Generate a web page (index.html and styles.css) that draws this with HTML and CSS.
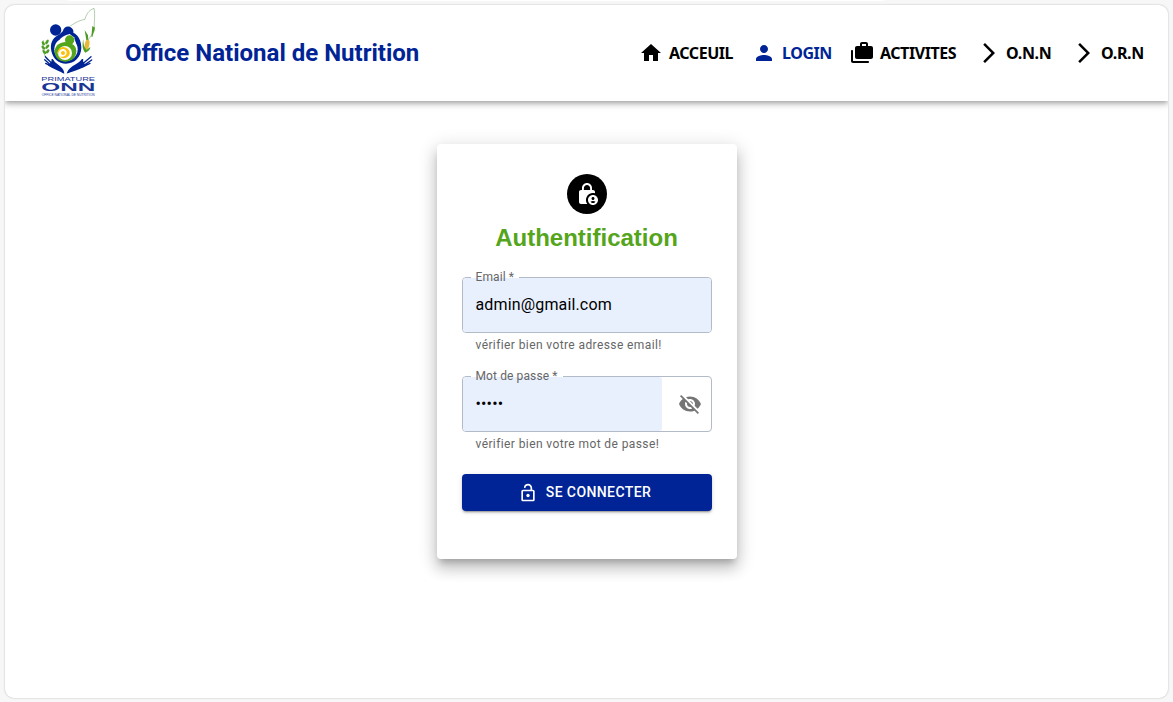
FILE: index.html
```html
<!DOCTYPE html>
<html lang="fr">
<head>
<meta charset="utf-8">
<title>Office National de Nutrition</title>
<link rel="stylesheet" href="styles.css">
</head>
<body>
<div class="tab-edge"></div>
<div class="window">
  <header class="appbar">
    <svg class="logo" viewBox="24 18 180 276">
      <path d="M103 91C125 74 145 61 165 58C168 45 175 31 192 25C197 44 190 78 194 92C187 103 178 112 172 125" fill="none" stroke="#7ba873" stroke-width="1.700"/>
      <path d="M187 78l8 5-8 28-3-1zM164 90l10 16 1 20-6-5z" fill="#4f9c25"/>
      <circle cx="77" cy="90" r="17" fill="#002495"/>
      <path d="M84 106C90 100 96 98 99 92C101 84 108 78 117 80C126 82 132 89 130 98C146 106 154 122 154 144C153 172 133 191 108 191C86 191 69 177 64 153C60 133 66 115 84 106Z" fill="#002495"/>
      <circle cx="108" cy="148" r="35" fill="#fff"/>
      <path d="M88 122C92 112 101 107 111 104L119 102L132 112L138 130L128 139L105 134Z" fill="#fff"/>
      <circle cx="119" cy="120" r="14" fill="#55a51c"/>
      <path d="M105 126C84 128 72 142 74 159C77 176 91 185 107 185C126 184 139 171 139 154C139 143 134 135 126 132Z" fill="#55a51c"/>
      <circle cx="105" cy="159" r="21" fill="#fff"/>
      <path d="M85 150C90 141 100 139 108 143C120 148 123 161 115 169C107 177 93 176 86 168C97 174 108 169 110 160C111 151 101 144 92 149C87 152 85 158 83 163C81 158 82 154 85 150Z" fill="#fdc10b"/>
      <circle cx="99" cy="159" r="6" fill="#fdc10b"/>
      <path d="M53 181C43 164 35 151 40 121" fill="none" stroke="#4e982c" stroke-width="2"/>
      <g fill="#4e9d25">
        <ellipse cx="40" cy="130" rx="4" ry="7" transform="rotate(-30 40 130)"/>
        <ellipse cx="51" cy="126" rx="4" ry="8" transform="rotate(32 51 126)"/>
        <ellipse cx="40" cy="143" rx="4" ry="7" transform="rotate(-45 40 143)"/>
        <ellipse cx="52" cy="140" rx="4" ry="8" transform="rotate(42 52 140)"/>
        <ellipse cx="43" cy="156" rx="4" ry="7" transform="rotate(-45 43 156)"/>
        <ellipse cx="53" cy="154" rx="4" ry="7" transform="rotate(38 53 154)"/>
      </g>
      <ellipse cx="171" cy="134" rx="7" ry="15" fill="#e8b936" transform="rotate(12 171 134)"/>
      <path d="M160 117C155 137 159 151 166 158C176 154 181 148 181 141L170 149C162 142 160 133 160 117Z" fill="#4e9d25"/>
      <g fill="none" stroke="#002495" stroke-linecap="round">
        <path d="M67 180C72 195 96 198 99 216C87 210 72 205 57 195" stroke-width="6" fill="#002495"/>
        <path d="M46 170L65 190M44 179L62 195M47 190L66 200" stroke-width="4"/>
        <path d="M157 180C150 195 122 198 115 216C130 211 147 207 166 195" stroke-width="6" fill="#002495"/>
        <path d="M183 170L160 190M185 180L162 196M180 190L158 201" stroke-width="4"/>
      </g>
      <g class="logo-text">
        <text x="34" y="244" font-size="18" textLength="161" lengthAdjust="spacingAndGlyphs">PRIMATURE</text>
        <text x="34" y="273" font-size="31" font-weight="700" textLength="162" lengthAdjust="spacingAndGlyphs">ONN</text>
        <text x="35" y="287" font-size="10" textLength="159" lengthAdjust="spacingAndGlyphs">OFFICE NATIONAL DE NUTRITION</text>
      </g>
    </svg>
    <h1 class="brand">Office National de Nutrition</h1>
    <nav class="nav">
      <a class="nav-item home"><svg class="icon" viewBox="0 0 24 24"><path d="M10 20v-6h4v6h5v-8h3L12 3 2 12h3v8z"/></svg><span>ACCEUIL</span></a>
      <a class="nav-item login"><svg class="icon" viewBox="0 0 24 24"><path d="M12 12c2.210 0 4-1.790 4-4s-1.790-4-4-4-4 1.790-4 4 1.790 4 4 4zm0 2c-2.670 0-8 1.340-8 4v2h16v-2c0-2.660-5.330-4-8-4z"/></svg><span>LOGIN</span></a>
      <a class="nav-item activities"><svg class="icon" viewBox="0 0 24 24"><path d="M2 9c-.55 0-1 .45-1 1v10c0 1.100.9 2 2 2h15c.55 0 1-.45 1-1s-.45-1-1-1H3V10c0-.55-.45-1-1-1zM18 5V3c0-1.100-.9-2-2-2h-4c-1.100 0-2 .9-2 2v2H7c-1.100 0-2 .9-2 2v9c0 1.100.9 2 2 2h14c1.100 0 2-.9 2-2V7c0-1.100-.9-2-2-2h-3zm-6-2h4v2h-4V3z"/></svg><span>ACTIVITES</span></a>
      <a class="nav-item onn"><svg class="icon" viewBox="0 0 24 24"><path d="M6.230 20.230 8 22l10-10L8 2 6.230 3.770 14.460 12z"/></svg><span>O.N.N</span></a>
      <a class="nav-item orn"><svg class="icon" viewBox="0 0 24 24"><path d="M6.230 20.230 8 22l10-10L8 2 6.230 3.770 14.460 12z"/></svg><span>O.R.N</span></a>
    </nav>
  </header>
  <main class="content">
    <form class="card">
      <div class="avatar"><svg class="icon" viewBox="0 0 24 24"><path d="M18 11c.7 0 1.370.1 2 .29V10c0-1.100-.9-2-2-2h-1V6c0-2.760-2.240-5-5-5S7 3.240 7 6v2H6c-1.100 0-2 .9-2 2v10c0 1.100.9 2 2 2h6.260A6.990 6.990 0 0 1 18 11zM8.900 6c0-1.710 1.390-3.100 3.100-3.100s3.100 1.390 3.100 3.100v2H8.900V6z"/><path d="M18 13c-2.760 0-5 2.240-5 5s2.240 5 5 5 5-2.240 5-5-2.240-5-5-5zm0 2c.83 0 1.500.67 1.500 1.500S18.830 18 18 18s-1.500-.67-1.500-1.500.67-1.500 1.500-1.500zm0 6c-1.030 0-1.940-.52-2.480-1.320.73-.42 1.570-.68 2.480-.68s1.750.26 2.480.68c-.54.8-1.450 1.320-2.480 1.320z"/></svg></div>
      <h2 class="title">Authentification</h2>
      <fieldset class="field">
        <legend class="label">Email *</legend>
        <div class="value filled">admin@gmail.com</div>
      </fieldset>
      <p class="helper">vérifier bien votre adresse email!</p>
      <fieldset class="field">
        <legend class="label">Mot de passe *</legend>
        <div class="value filled password">•••••</div>
        <div class="toggle"><svg class="icon" viewBox="0 0 24 24"><path d="M12 7c2.760 0 5 2.240 5 5 0 .65-.13 1.260-.36 1.830l2.920 2.920c1.510-1.260 2.700-2.890 3.430-4.750-1.730-4.390-6-7.500-11-7.500-1.400 0-2.740.25-3.980.7l2.160 2.160C10.740 7.130 11.350 7 12 7zM2 4.270l2.280 2.280.46.46C3.080 8.300 1.780 10.020 1 12c1.730 4.390 6 7.500 11 7.500 1.550 0 3.030-.3 4.380-.84l.42.42L19.730 22 21 20.730 3.270 3 2 4.270zM7.530 9.800l1.550 1.550c-.05.21-.08.43-.08.65 0 1.660 1.340 3 3 3 .22 0 .44-.03.65-.08l1.550 1.550c-.67.33-1.410.53-2.200.53-2.760 0-5-2.240-5-5 0-.79.2-1.530.53-2.200zm4.310-.78l3.150 3.150.02-.16c0-1.660-1.340-3-3-3l-.17.01z"/></svg></div>
      </fieldset>
      <p class="helper">vérifier bien votre mot de passe!</p>
      <button class="submit" type="button">
        <svg class="icon" viewBox="0 0 24 24"><path d="M18 8h-1V6c0-2.760-2.240-5-5-5-2.280 0-4.270 1.540-4.840 3.750-.14.54.18 1.080.72 1.220.53.14 1.080-.18 1.220-.72C9.440 3.930 10.630 3 12 3c1.650 0 3 1.350 3 3v2H6c-1.100 0-2 .9-2 2v10c0 1.100.9 2 2 2h12c1.100 0 2-.9 2-2V10c0-1.100-.9-2-2-2zm0 12H6V10h12v10z"/><circle cx="12" cy="15" r="2"/></svg>
        <span>SE CONNECTER</span>
      </button>
    </form>
  </main>
</div>
</body>
</html>
```
FILE: styles.css
```css
* { box-sizing: border-box; }
body {
  margin: 0;
  height: 702px;
  padding: 5px;
  overflow: hidden;
  background: #f7f7f7;
  font-family: Roboto, "Liberation Sans", sans-serif;
}
.tab-edge {
  position: absolute;
  left: 64px;
  top: -12px;
  width: 824px;
  height: 13px;
  border-radius: 8px;
  background: #fff;
}
.window {
  width: 1163px;
  height: 693px;
  position: relative;
  overflow: hidden;
  border-radius: 9px;
  background: #fff;
}
body::after {
  content: "";
  position: absolute;
  left: 5px;
  top: 5px;
  width: 1163px;
  height: 693px;
  border-radius: 9px;
  box-shadow: 0 0 2px 0 rgba(0,0,0,.28);
  pointer-events: none;
}
.icon { display: block; width: 24px; height: 24px; flex: none; fill: currentColor; }
.appbar {
  display: flex;
  height: 96px;
  align-items: flex-start;
  padding: 1px 0 0 33px;
  box-shadow: 0 2px 4px -1px rgba(0,0,0,.2), 0 4px 5px rgba(0,0,0,.14), 0 1px 10px rgba(0,0,0,.12);
}
.logo { width: 60px; height: 92px; flex: none; }
.logo-text { font-family: "Liberation Sans", sans-serif; fill: #1b3595; }
.brand {
  margin: 31px 0 0 27px;
  width: 514px;
  color: #002495;
  font-size: 24px;
  line-height: 32px;
  font-weight: 700;
  white-space: nowrap;
}
.nav {
  display: flex;
  align-items: center;
  height: 24px;
  margin-top: 35px;
  font: 700 16px/24px "Noto Sans", "Open Sans", sans-serif;
  letter-spacing: -.45px;
  color: #000;
}
.nav-item { display: flex; align-items: center; gap: 6px; white-space: nowrap; }
.home { width: 113px; }
.login { width: 98px; color: #002495; }
.activities { width: 127px; }
.onn { width: 95px; gap: 5px; letter-spacing: -.3px; }
.orn { width: 72px; gap: 5px; letter-spacing: -.3px; }
.content { display: flex; justify-content: center; padding-top: 43px; }
.card {
  width: 300px;
  height: 415px;
  display: flex;
  flex-direction: column;
  padding: 30px 25px 0;
  background: #fff;
  border-radius: 4px;
  box-shadow: 0 6px 6px -3px rgba(0,0,0,.2), 0 10px 14px 1px rgba(0,0,0,.14), 0 4px 18px 3px rgba(0,0,0,.12);
}
.avatar {
  width: 40px;
  height: 40px;
  align-self: center;
  display: grid;
  place-items: center;
  border-radius: 50%;
  background: #000;
  color: #fff;
}
.title {
  margin: 10px 0 19px;
  height: 28px;
  text-align: center;
  font: 700 24px/28px "Liberation Sans", Arial, sans-serif;
  color: #55a51c;
}
.field {
  display: flex;
  margin: 0;
  padding: 0;
  width: 250px;
  height: 62px;
  min-width: 0;
  border: 1px solid #b3bac8;
  border-radius: 4px;
}
.label {
  position: relative;
  z-index: 1;
  height: 13px;
  margin-left: 8px;
  padding: 0 5px;
  font-size: 12px;
  line-height: 13px;
  letter-spacing: .11px;
  color: #666;
}
.value {
  flex: 1;
  height: 54px;
  margin-top: -6px;
  padding: 0 13px;
  font-size: 16px;
  line-height: 54px;
  letter-spacing: .15px;
  border-radius: 3px;
}
.filled { background: #e8f0fe; }
.toggle {
  width: 49px;
  height: 54px;
  margin-top: -6px;
  display: flex;
  align-items: center;
  padding-left: 16px;
  color: #757575;
}
.helper {
  margin: 2px 14px 15px;
  height: 20px;
  font-size: 12px;
  line-height: 20px;
  letter-spacing: .4px;
  color: #666;
  white-space: nowrap;
}
.submit {
  display: flex;
  align-items: center;
  justify-content: center;
  width: 250px;
  height: 37px;
  margin-top: 5px;
  padding: 0 4px 0 0;
  border: 0;
  border-radius: 4px;
  background: #002495;
  color: #fff;
  font: 500 14px/24px Roboto, sans-serif;
  letter-spacing: .4px;
  box-shadow: 0 3px 1px -2px rgba(0,0,0,.2), 0 2px 2px rgba(0,0,0,.14), 0 1px 5px rgba(0,0,0,.12);
}
.submit .icon { width: 20px; height: 20px; margin-right: 8px; }
.submit span { padding-bottom: 2px; }
```
